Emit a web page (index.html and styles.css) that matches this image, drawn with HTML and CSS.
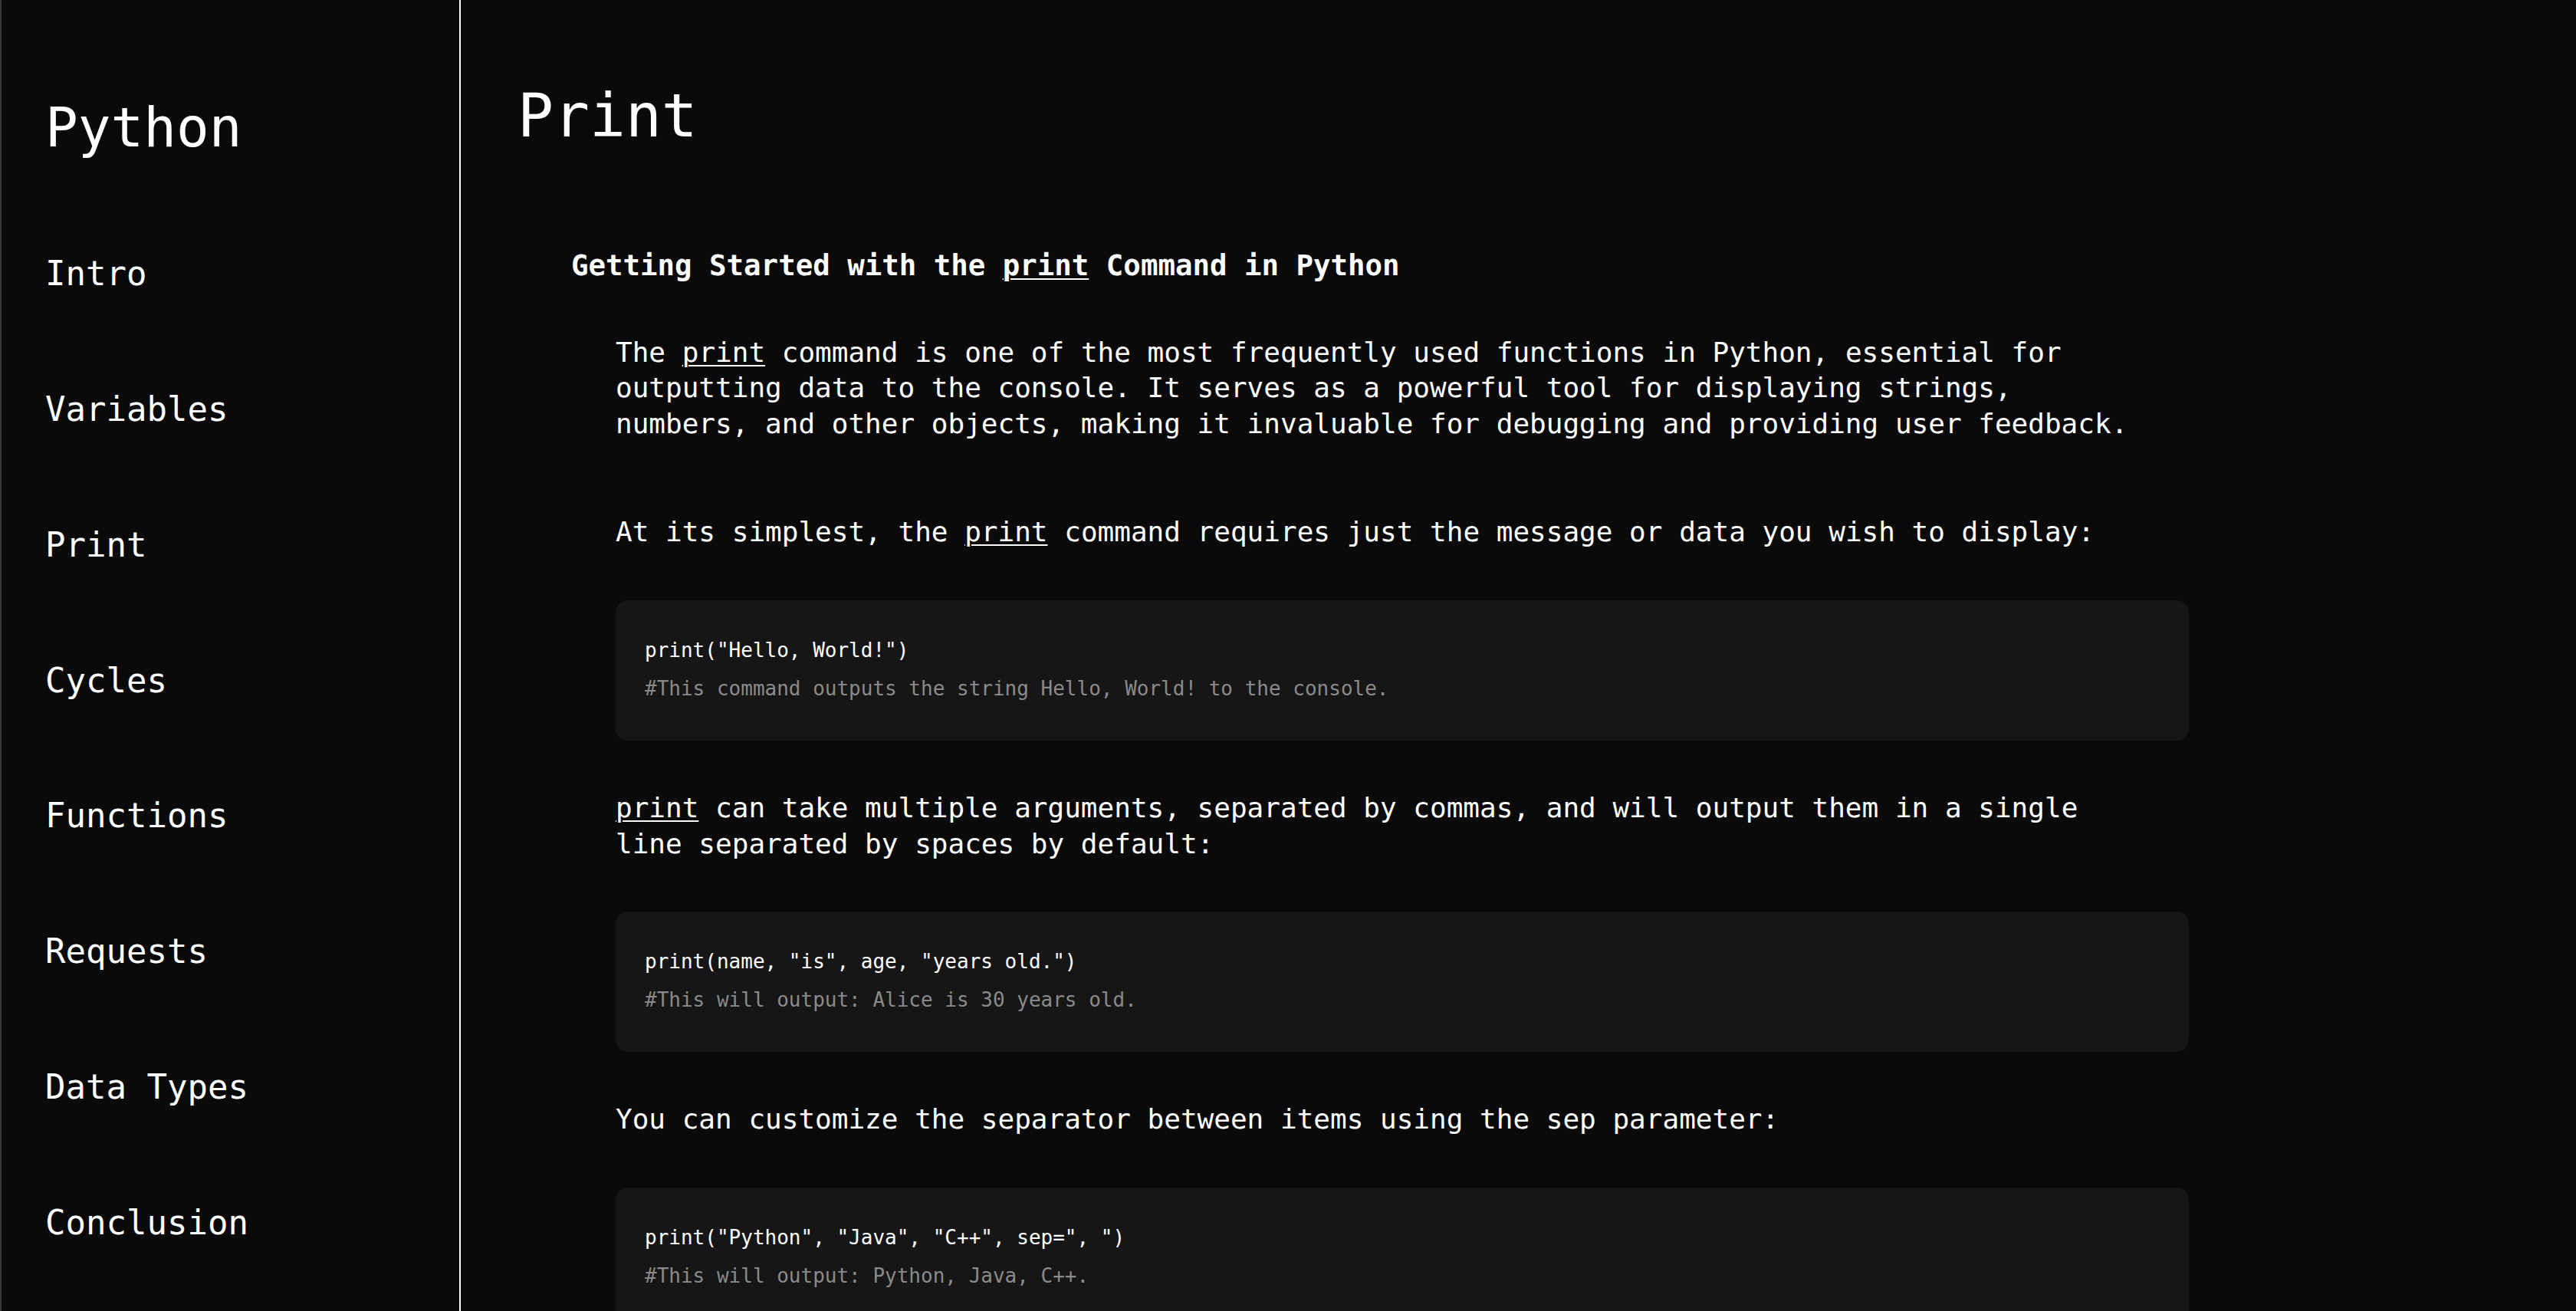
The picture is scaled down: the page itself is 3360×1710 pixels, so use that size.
FILE: index.html
```html
<!DOCTYPE html>
<html lang="en">
<head>
<meta charset="utf-8">
<title>Python – Print</title>
<link rel="stylesheet" href="styles.css">
</head>
<body>
<div class="layout">
  <aside class="sidebar">
    <div class="brand">Python</div>
    <nav class="nav">
      <a class="nav-item" href="#">Intro</a>
      <a class="nav-item" href="#">Variables</a>
      <a class="nav-item" href="#">Print</a>
      <a class="nav-item" href="#">Cycles</a>
      <a class="nav-item" href="#">Functions</a>
      <a class="nav-item" href="#">Requests</a>
      <a class="nav-item" href="#">Data Types</a>
      <a class="nav-item" href="#">Conclusion</a>
    </nav>
  </aside>
  <main class="main">
    <h1 class="page-title">Print</h1>
    <h2 class="section-title">Getting Started with the <span class="kw">print</span> Command in Python</h2>
    <div class="section-body">
      <p class="text text-intro">The <span class="kw">print</span> command is one of the most frequently used functions in Python, essential for outputting data to the console. It serves as a powerful tool for displaying strings, numbers, and other objects, making it invaluable for debugging and providing user feedback.</p>
      <p class="text">At its simplest, the <span class="kw">print</span> command requires just the message or data you wish to display:</p>
      <div class="code">
        <div class="code-line">print("Hello, World!")</div>
        <div class="code-comment">#This command outputs the string Hello, World! to the console.</div>
      </div>
      <p class="text"><span class="kw">print</span> can take multiple arguments, separated by commas, and will output them in a single line separated by spaces by default:</p>
      <div class="code">
        <div class="code-line">print(name, "is", age, "years old.")</div>
        <div class="code-comment">#This will output: Alice is 30 years old.</div>
      </div>
      <p class="text">You can customize the separator between items using the sep parameter:</p>
      <div class="code">
        <div class="code-line">print("Python", "Java", "C++", sep=", ")</div>
        <div class="code-comment">#This will output: Python, Java, C++.</div>
      </div>
    </div>
  </main>
</div>
</body>
</html>
```

FILE: styles.css
```css
* {
  box-sizing: border-box;
}

html, body {
  margin: 0;
  padding: 0;
  background: #0a0a0a;
  color: #ffffff;
  font-family: "DejaVu Sans Mono", "Liberation Mono", monospace;
}

.layout {
  display: flex;
  min-height: 100vh;
}

.sidebar {
  flex: 0 0 601px;
  width: 601px;
  border-left: 2px solid #3a3a3a;
  border-right: 2px solid #ffffff;
  padding: 124px 0 0 57px;
  display: flex;
  flex-direction: column;
}

.brand {
  font-size: 71px;
  line-height: 1.2;
  font-weight: normal;
}

.nav {
  display: flex;
  flex-direction: column;
  gap: 124px;
  margin-top: 122px;
}

.nav-item {
  color: #ffffff;
  text-decoration: none;
  font-size: 44px;
  line-height: 1.2;
}

.main {
  flex: 1;
  padding: 105px 0 0 74px;
}

.page-title {
  margin: 0;
  font-size: 78px;
  line-height: 1.2;
  font-weight: normal;
}

.section-title {
  margin: 123px 0 0 70px;
  font-size: 37.4px;
  line-height: 48px;
  font-weight: bold;
}

.kw {
  text-decoration: underline;
  text-decoration-thickness: 2px;
  text-underline-offset: 4px;
}

.section-body {
  margin: 67px 0 0 128px;
  width: 2052px;
  display: flex;
  flex-direction: column;
  gap: 65px;
}

.text {
  margin: 0;
  width: 2000px;
  font-size: 36px;
  line-height: 46.8px;
}

.text-intro {
  margin-bottom: 29px;
}

.code {
  background: #161616;
  border-radius: 16px;
  padding: 40px 38px 43px;
  font-family: "DejaVu Sans Mono", "Liberation Mono", monospace;
  font-size: 26px;
  line-height: 50px;
}

.code-line {
  color: #ffffff;
}

.code-comment {
  color: #8a8a8a;
}
```
